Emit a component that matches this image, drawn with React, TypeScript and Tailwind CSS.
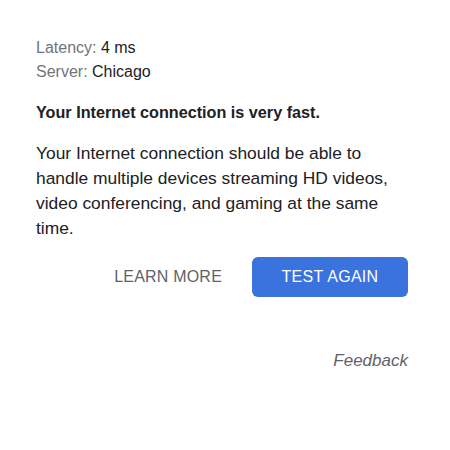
export default function App() {
  return (
    <div className="w-[450px] h-[450px] bg-white font-['Liberation_Sans',Arial,sans-serif] text-[#202124]">
      <div className="pt-[36px] pl-[36px] w-[396px]">
        <div className="text-[16px] leading-[24px]">
          <div>
            <span className="text-[#70757a]">Latency: </span>
            <span>4 ms</span>
          </div>
          <div>
            <span className="text-[#70757a]">Server: </span>
            <span>Chicago</span>
          </div>
        </div>
        <p className="mt-[16px] text-[16.2px] leading-[24px] font-bold">Your Internet connection is very fast.</p>
        <p className="mt-[17px] text-[17.4px] leading-[25px]">
          Your Internet connection should be able to handle multiple devices streaming HD videos, video
          conferencing, and gaming at the same time.
        </p>
        <div className="ml-[-40px] mr-[-12px] mt-[16px] flex items-center justify-end gap-[30px]">
          <button className="text-[16px] text-[#5f6368] tracking-[0.2px]">LEARN MORE</button>
          <button className="w-[156px] h-[40px] rounded-[6px] bg-[#3a73de] text-white text-[16px] tracking-[0.3px]">
            TEST AGAIN
          </button>
        </div>
        <div className="mr-[-12px] mt-[51px] flex justify-end">
          <span className="italic text-[17px] text-[#5f6368]">Feedback</span>
        </div>
      </div>
    </div>
  );
}
